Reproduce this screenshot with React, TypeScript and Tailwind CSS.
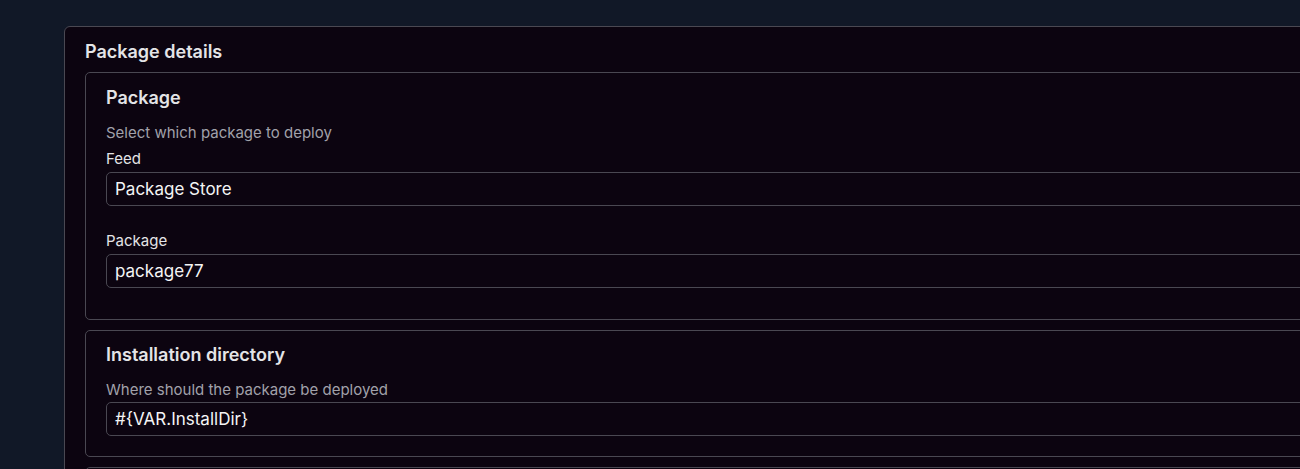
import React from "react";

interface FieldProps {
  label?: string;
  value: string;
  className?: string;
}

function Field({ label, value, className }: FieldProps) {
  return (
    <div className={className}>
      {label && (
        <label className="mb-[3px] block text-[15px] leading-5 text-[#e4e4e7]">{label}</label>
      )}
      <div className="flex h-[34px] items-center rounded-[5px] border border-[#4a4852] px-2 pt-[2px] text-[17px] text-[#f4f4f5]">
        {value}
      </div>
    </div>
  );
}

interface SectionProps {
  title: string;
  description: string;
  children: React.ReactNode;
  className?: string;
}

function Section({ title, description, children, className }: SectionProps) {
  return (
    <div
      className={`rounded-[5px] border border-[#4a4852] px-5 ${className ?? ""}`}
    >
      <h3 className="text-lg leading-7 font-semibold text-[#e4e4e7]">{title}</h3>
      <p className="mt-[11px] text-[15px] leading-5 text-[#a1a1aa]">{description}</p>
      {children}
    </div>
  );
}

export default function App() {
  return (
    <div
      className="h-[469px] w-[1300px] overflow-hidden bg-[#111827] pt-[26px] pl-16"
      style={{ fontFamily: "Inter, 'Noto Sans', sans-serif" }}
    >
      <div className="w-[1400px] rounded-[6px] border border-[#4a4852] bg-[#0c0410] px-5 pt-[11px]">
        <h2 className="text-lg leading-7 font-semibold text-[#e4e4e7]">
          Package details
        </h2>
        <div className="mt-[6px] flex flex-col gap-[10px]">
          <Section
            title="Package"
            description="Select which package to deploy"
            className="pt-[11px] pb-[31px]"
          >
            <Field label="Feed" value="Package Store" className="mt-[6px]" />
            <Field label="Package" value="package77" className="mt-[25px]" />
          </Section>
          <Section
            title="Installation directory"
            description="Where should the package be deployed"
            className="pt-[10px] pb-5"
          >
            <Field value="#{VAR.InstallDir}" className="mt-[2px]" />
          </Section>
          <div className="h-16 rounded-[5px] border border-[#4a4852]" />
        </div>
      </div>
    </div>
  );
}
